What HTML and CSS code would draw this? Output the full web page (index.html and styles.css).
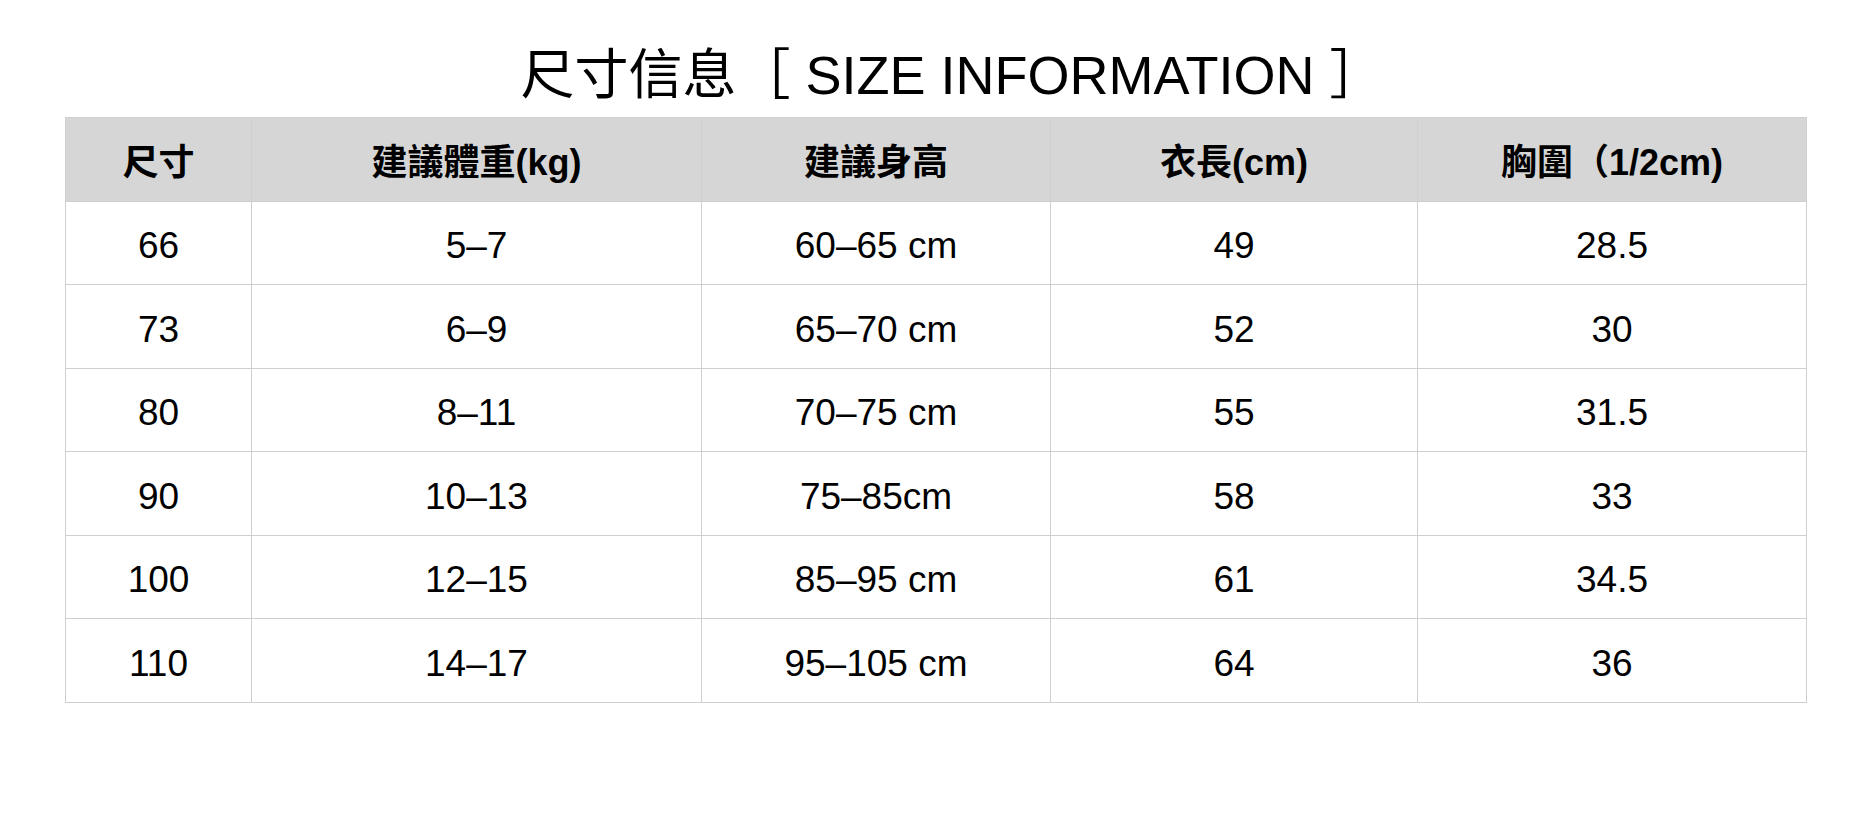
FILE: index.html
```html
<!DOCTYPE html>
<html lang="zh-Hant">
<head>
<meta charset="utf-8">
<title>尺寸信息</title>
<link rel="stylesheet" href="styles.css">
</head>
<body>
<div class="page">
  <h1 class="title">尺寸信息［ SIZE INFORMATION ］</h1>
  <table class="size-table">
    <colgroup>
      <col class="c1"><col class="c2"><col class="c3"><col class="c4"><col class="c5">
    </colgroup>
    <thead>
      <tr><th>尺寸</th><th>建議體重(kg)</th><th>建議身高</th><th>衣長(cm)</th><th>胸圍（1/2cm)</th></tr>
    </thead>
    <tbody>
      <tr><td>66</td><td>5–7</td><td>60–65 cm</td><td>49</td><td>28.5</td></tr>
      <tr><td>73</td><td>6–9</td><td>65–70 cm</td><td>52</td><td>30</td></tr>
      <tr><td>80</td><td>8–11</td><td>70–75 cm</td><td>55</td><td>31.5</td></tr>
      <tr><td>90</td><td>10–13</td><td>75–85cm</td><td>58</td><td>33</td></tr>
      <tr><td>100</td><td>12–15</td><td>85–95 cm</td><td>61</td><td>34.5</td></tr>
      <tr><td>110</td><td>14–17</td><td>95–105 cm</td><td>64</td><td>36</td></tr>
    </tbody>
  </table>
</div>
</body>
</html>
```

FILE: styles.css
```css
html, body {
  margin: 0;
  padding: 0;
  background: #ffffff;
}

.page {
  width: 1868px;
  height: 814px;
  padding-top: 43px;
  box-sizing: border-box;
  font-family: "Liberation Sans", "Noto Sans CJK TC", "Noto Sans CJK SC", sans-serif;
  color: #000;
}

.title {
  margin: 0 0 10px 0;
  padding-left: 36px;
  height: 64px;
  line-height: 64px;
  font-size: 54px;
  font-weight: 400;
  text-align: center;
  white-space: nowrap;
}

.size-table {
  margin-left: 65px;
  width: 1741px;
  border-collapse: collapse;
  table-layout: fixed;
}

.c1 { width: 186px; }
.c2 { width: 450px; }
.c3 { width: 349px; }
.c4 { width: 367px; }
.c5 { width: 389px; }

.size-table th,
.size-table td {
  border: 1px solid #cfcfcf;
  padding: 0;
  text-align: center;
  vertical-align: middle;
  white-space: nowrap;
}

.size-table th {
  height: 82.5px;
  background: #d6d6d6;
  font-size: 36px;
  font-weight: 700;
}

.size-table td {
  height: 75.5px;
  padding-top: 7px;
  font-size: 37px;
  font-weight: 400;
}
```
